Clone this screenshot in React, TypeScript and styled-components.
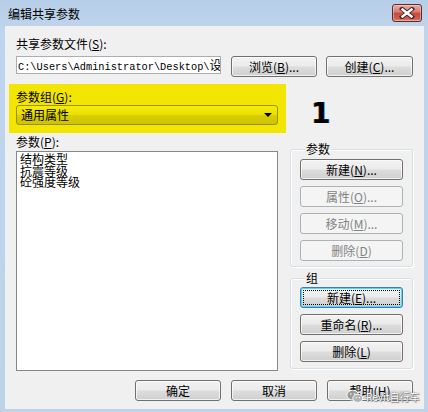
import React from "react";
import styled, { createGlobalStyle, css } from "styled-components";

const Global = createGlobalStyle`
  html, body { margin: 0; padding: 0; background: #bcd3ea; }
  body { font-family: "Noto Sans CJK SC", "Liberation Sans", sans-serif; font-size: 12px; color: #000; }
  * { box-sizing: border-box; }
`;

const Window = styled.div`
  position: relative;
  width: 428px;
  height: 412px;
  display: flex;
  flex-direction: column;
  background: linear-gradient(#b7cee8, #bfd5ed 30px, #bcd3ea);
  overflow: hidden;
`;

const TitleBar = styled.div`
  height: 26px;
  flex: none;
  display: flex;
  align-items: center;
  justify-content: space-between;
  padding: 1px 6px 0 8px;
`;

const Title = styled.span`
  font-size: 12px;
  line-height: 14px;
  color: #000;
`;

const CloseBtn = styled.div`
  width: 30px;
  height: 18px;
  margin-top: -2px;
  border: 1px solid #5e2a28;
  border-radius: 3px;
  background: linear-gradient(#e8a9a1, #d67a6f 45%, #c24b3f 50%, #cd5e50 85%, #e08a78);
  box-shadow: inset 0 0 0 1px rgba(255, 255, 255, 0.35);
  display: flex;
  align-items: center;
  justify-content: center;
`;

const Client = styled.div`
  flex: 1;
  margin: 0 4px 3px 5px;
  background: #f0f0f0;
  padding: 11px 11px 0 11px;
  display: flex;
  flex-direction: column;
`;

const Label = styled.div<{ $mt?: number }>`
  line-height: 14px;
  height: 14px;
  margin-top: ${(p) => p.$mt ?? 0}px;
  white-space: nowrap;
`;

const Row = styled.div<{ $mt?: number; $gap?: number; $justify?: string }>`
  display: flex;
  align-items: flex-start;
  margin-top: ${(p) => p.$mt ?? 0}px;
  gap: ${(p) => p.$gap ?? 0}px;
  justify-content: ${(p) => p.$justify ?? "flex-start"};
`;

const PathBox = styled.div`
  width: 205px;
  height: 18px;
  border: 1px solid #abadb3;
  background: #fff;
  font-family: "Liberation Mono", "Noto Sans CJK SC", monospace;
  font-size: 10.3px;
  line-height: 16px;
  padding-left: 1px;
  white-space: nowrap;
  overflow: hidden;
`;

const CjkTail = styled.span`
  font-family: "Noto Sans CJK SC", sans-serif;
  font-size: 12px;
`;

const Button = styled.div<{ $w?: number; $disabled?: boolean; $focused?: boolean }>`
  position: relative;
  width: ${(p) => p.$w ?? 103}px;
  height: 21px;
  flex: none;
  border: 1px solid #707070;
  border-radius: 3px;
  background: linear-gradient(#f2f2f2, #ebebeb 48%, #dddddd 52%, #cfcfcf);
  box-shadow: inset 0 0 0 1px rgba(255, 255, 255, 0.7);
  display: flex;
  align-items: center;
  justify-content: center;
  line-height: 14px;
  white-space: nowrap;
  color: #000;
  ${(p) =>
    p.$disabled &&
    css`
      border-color: #adb2b5;
      background: #f4f4f4;
      box-shadow: none;
      color: #838383;
    `}
  ${(p) =>
    p.$focused &&
    css`
      border-color: #3c7fb1;
      box-shadow: inset 0 0 0 1px #48d8fb;
      &::after {
        content: "";
        position: absolute;
        inset: 2px;
        border: 1px dotted #000;
        border-radius: 1px;
      }
    `}
`;

const Highlight = styled.div`
  width: 277px;
  height: 49px;
  margin-left: -7px;
  padding: 6px 8px 0 7px;
  background: #f2e600;
  flex: none;
`;

const Combo = styled.div`
  margin-top: 1px;
  width: 262px;
  height: 20px;
  border: 1px solid #99910e;
  border-radius: 3px;
  background: linear-gradient(#f6ea10, #eadf00 48%, #d9ce00 52%, #cec300);
  display: flex;
  align-items: center;
  justify-content: space-between;
  padding: 0 4px 0 4px;
  line-height: 14px;
`;

const Arrow = styled.span`
  width: 0;
  height: 0;
  border-left: 4px solid transparent;
  border-right: 4px solid transparent;
  border-top: 4px solid #000;
  margin-right: 1px;
`;

const Number = styled.div`
  margin: 15px 0 0 25px;
  font-family: "DejaVu Sans", sans-serif;
  font-weight: bold;
  font-size: 28px;
  line-height: 30px;
  color: #000;
  text-shadow: -0.6px 0 #c08040, 0.6px 0 #2080ff;
`;

const LeftCol = styled.div`
  display: flex;
  flex-direction: column;
`;

const ListBox = styled.div`
  margin-top: 2px;
  width: 262px;
  height: 220px;
  border: 1px solid #828790;
  background: #fff;
  padding: 1px 0 0 3px;
`;

const ListItem = styled.div`
  line-height: 11.5px;
  height: 11.5px;
  white-space: nowrap;
`;

const RightCol = styled.div`
  margin-top: 10px;
  width: 124px;
  display: flex;
  flex-direction: column;
  gap: 5px;
`;

const Group = styled.fieldset<{ $pt: number; $pb: number }>`
  margin: 0;
  min-width: 0;
  border: 1px solid #d5dfe5;
  border-radius: 3px;
  box-shadow: inset 1px 1px 0 #fff, 1px 1px 0 #fff;
  padding: ${(p) => p.$pt}px 9px ${(p) => p.$pb}px 9px;
  display: flex;
  flex-direction: column;
  gap: 6px;
`;

const Legend = styled.legend`
  padding: 0 1px;
  margin-left: 5px;
  line-height: 12px;
  height: 12px;
  font-size: 12px;
`;

const Watermark = styled.div`
  position: absolute;
  left: 346px;
  top: 389px;
  display: flex;
  align-items: center;
  gap: 2px;
  color: #fff;
  font-size: 10px;
  line-height: 12px;
  text-shadow: 0 0 1px #666, 0 0 1px #666, 1px 1px 1px #888;
  pointer-events: none;
`;

const M = ({ k }: { k: string }) => (
  <>
    (<u>{k}</u>)
  </>
);

export default function App() {
  return (
    <>
      <Global />
      <Window>
        <TitleBar>
          <Title>编辑共享参数</Title>
          <CloseBtn>
            <svg width="16" height="12" viewBox="0 0 16 12">
              <path d="M3 2 L13 10 M13 2 L3 10" stroke="#4a2220" strokeWidth="4.2" strokeLinecap="square" />
              <path d="M3.5 2.5 L12.5 9.5 M12.5 2.5 L3.5 9.5" stroke="#fff" strokeWidth="2.4" strokeLinecap="square" />
            </svg>
          </CloseBtn>
        </TitleBar>
        <Client>
          <Label>
            共享参数文件<M k="S" />:
          </Label>
          <Row $mt={5}>
            <PathBox>
              C:\Users\Administrator\Desktop\<CjkTail>设</CjkTail>
            </PathBox>
            <Button $w={86} style={{ marginLeft: 10 }}>
              浏览<M k="B" />...
            </Button>
            <Button $w={87} style={{ marginLeft: 9 }}>
              创建<M k="C" />...
            </Button>
          </Row>
          <Row $mt={7}>
            <Highlight>
              <Label>
                参数组<M k="G" />:
              </Label>
              <Combo>
                <span>通用属性</span>
                <Arrow />
              </Combo>
            </Highlight>
            <Number>1</Number>
          </Row>
          <Row $gap={12}>
            <LeftCol>
              <Label $mt={2}>
                参数<M k="P" />:
              </Label>
              <ListBox>
                <ListItem>结构类型</ListItem>
                <ListItem>抗震等级</ListItem>
                <ListItem>砼强度等级</ListItem>
              </ListBox>
            </LeftCol>
            <RightCol>
              <Group $pt={4} $pb={5}>
                <Legend>参数</Legend>
                <Button>
                  新建<M k="N" />...
                </Button>
                <Button $disabled>
                  属性<M k="O" />...
                </Button>
                <Button $disabled>
                  移动<M k="M" />...
                </Button>
                <Button $disabled>
                  删除<M k="D" />
                </Button>
              </Group>
              <Group $pt={3} $pb={6}>
                <Legend>组</Legend>
                <Button $focused>
                  新建<M k="E" />...
                </Button>
                <Button>
                  重命名<M k="R" />...
                </Button>
                <Button>
                  删除<M k="L" />
                </Button>
              </Group>
            </RightCol>
          </Row>
          <Row $mt={9} $gap={10} $justify="flex-end">
            <Button $w={86}>确定</Button>
            <Button $w={86}>取消</Button>
            <Button $w={86}>
              帮助<M k="H" />
            </Button>
          </Row>
        </Client>
        <Watermark>
          <svg width="18" height="15" viewBox="0 0 20 16">
            <ellipse cx="7.5" cy="6.5" rx="6.5" ry="5.5" fill="#9a9a9a" stroke="#fff" strokeWidth="1" />
            <ellipse cx="13" cy="10" rx="5.5" ry="4.6" fill="#b5b5b5" stroke="#fff" strokeWidth="1" />
            <circle cx="5.3" cy="5.2" r="0.9" fill="#fff" />
            <circle cx="9.5" cy="5.2" r="0.9" fill="#fff" />
            <circle cx="11.3" cy="9.3" r="0.7" fill="#fff" />
            <circle cx="14.8" cy="9.3" r="0.7" fill="#fff" />
          </svg>
          <span>Revit自行车</span>
        </Watermark>
      </Window>
    </>
  );
}
